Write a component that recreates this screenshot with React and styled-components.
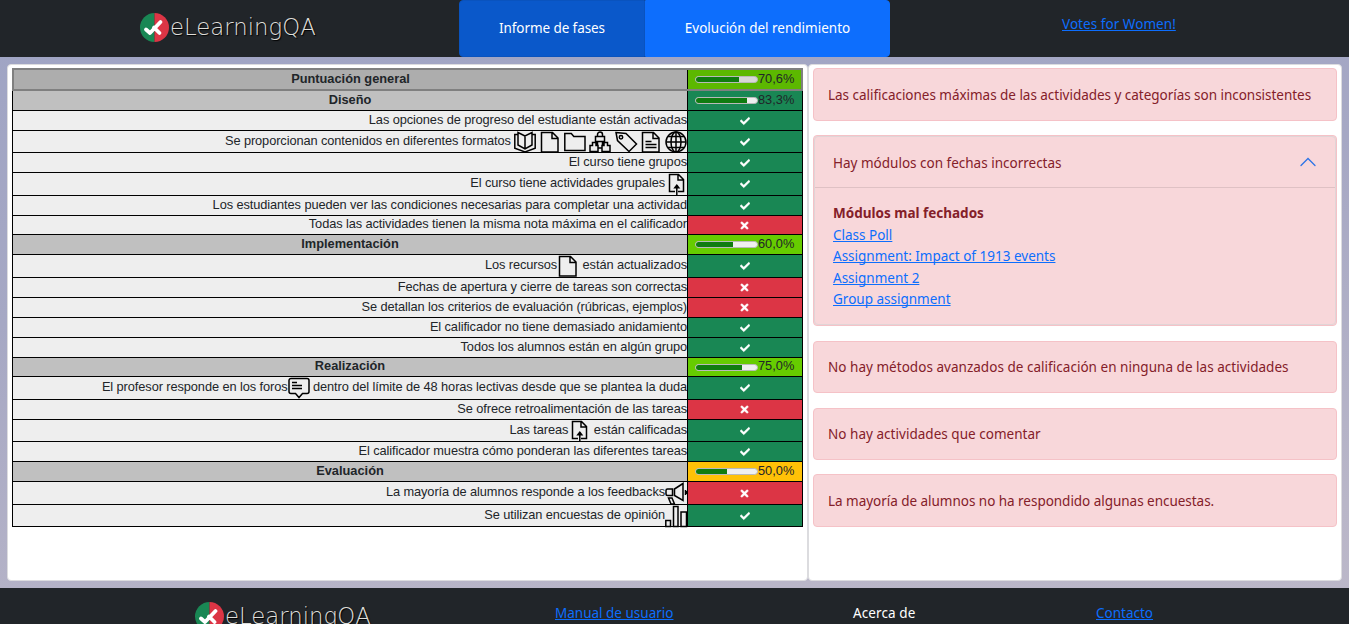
import React from 'react';
import styled, { createGlobalStyle } from 'styled-components';
import { FaCheck, FaTimes } from 'react-icons/fa';

const Global = createGlobalStyle`
  * { box-sizing: border-box; }
  body {
    margin: 0;
    height: 624px;
    overflow: hidden;
    color: #212529;
    font-family: "Noto Sans", "Open Sans", sans-serif;
    font-size: 13.5px;
  }
`;

const Page = styled.div`
  width: 1349px;
  height: 624px;
  overflow: hidden;
  display: flex;
  flex-direction: column;
  background: linear-gradient(172deg, #9fa4c4 0%, #a6a8c4 40%, #b9b6c8 85%, #bcb8c9 100%);
`;

const Header = styled.header`
  height: 57px;
  flex: none;
  display: flex;
  background: #212529;
`;

const HeaderSide = styled.div`
  width: ${(p) => p.$w}px;
  padding: ${(p) => p.$pad};
  flex: none;
`;

const Tab = styled.button`
  width: ${(p) => p.$w}px;
  height: 57px;
  border: 1px solid ${(p) => (p.$active ? '#0a53be' : '#0d6efd')};
  border-radius: ${(p) => (p.$active ? '4px 0 0 4px' : '0 4px 4px 0')};
  background: ${(p) => (p.$active ? '#0a58ca' : '#0d6efd')};
  color: #fff;
  font: inherit;
  padding: 0 0 2px;
  letter-spacing: ${(p) => p.$ls || 0}px;
`;

const Link = styled.a`
  color: #0d6efd;
  text-decoration: underline;
  text-underline-offset: 1px;
  text-decoration-thickness: 1px;
  text-decoration-skip-ink: none;
  letter-spacing: ${(p) => p.$ls || 0}px;
  white-space: nowrap;
`;

const LogoRow = styled.div`
  display: flex;
  align-items: center;
  height: 30px;
`;

const LogoText = styled.span`
  font-family: "DejaVu Sans", sans-serif;
  font-weight: 200;
  font-size: 22.8px;
  line-height: 30px;
  color: #deddd9;
  margin-left: 1px;
  text-shadow: 1px 1px 1px #000;
  white-space: nowrap;
`;

const Main = styled.main`
  height: 531px;
  flex: none;
  padding: 7px;
  display: flex;
`;

const Card = styled.section`
  width: ${(p) => p.$w}px;
  height: 517px;
  flex: none;
  background: #fff;
  border: 1px solid #dcdcdf;
  border-radius: 4px;
  padding: ${(p) => p.$pad};
`;

const Table = styled.div`
  width: 791px;
  font-family: "Liberation Sans", Arial, sans-serif;
  font-size: 12.8px;
`;

const Row = styled.div`
  display: flex;
  height: ${(p) => p.$h}px;
  border: solid #000;
  border-width: 0 1px 1px;
`;

const TotalRow = styled(Row)`
  border: 2px solid #808080;
`;

const Label = styled.div`
  width: ${(p) => p.$w || 674}px;
  flex: none;
  display: flex;
  align-items: center;
  justify-content: flex-end;
  background: #eee;
  white-space: pre;
  line-height: 18px;
  letter-spacing: -0.088px;
`;

const LabelText = styled.span`
  padding-bottom: 2px;
`;

const Heading = styled(Label)`
  justify-content: center;
  font-weight: bold;
  letter-spacing: 0;
  background: ${(p) => p.$bg || '#c0c0c0'};
  padding-bottom: 2px;
`;

const Status = styled.div`
  flex: 1;
  display: flex;
  align-items: center;
  justify-content: center;
  border-left: 1px solid #000;
  padding-right: 1px;
  background: ${(p) => (p.$ok ? '#198754' : '#dc3545')};
  color: #fff;
  font-size: ${(p) => (p.$ok ? 10 : 11)}px;
  svg {
    stroke: #fff;
    stroke-width: 20px;
  }
`;

const Score = styled.div`
  flex: 1;
  display: flex;
  align-items: center;
  border-left: 1px solid #000;
  padding-left: 7px;
  background: ${(p) => p.$bg};
  line-height: 16px;
  font-size: 12.8px;
`;

const ScoreText = styled.span`
  padding-bottom: 2px;
`;

const Track = styled.div`
  width: 63px;
  height: 7px;
  flex: none;
  overflow: hidden;
  border: 1px solid #b9b9b9;
  border-radius: 4px;
  background: ${(p) => p.$bg};
`;

const Fill = styled.div`
  height: 5px;
  background: #107c10;
`;

const Icons = styled.span`
  display: flex;
  gap: 3.2px;
  margin-left: ${(p) => p.$ml || 0}px;
`;

const Svg = styled.svg`
  width: 22px;
  height: 22px;
  flex: none;
  display: block;
  margin: -1px 0;
  overflow: visible;
  fill: none;
  stroke: #000;
  stroke-width: 1.5;
`;

const Alert = styled.div`
  height: ${(p) => p.$h}px;
  margin-bottom: ${(p) => p.$mb}px;
  display: flex;
  align-items: center;
  padding: 0 14px;
  background: #f8d7da;
  border: 1px solid #f5c2c7;
  border-radius: 4px;
  color: #842029;
  white-space: nowrap;
  letter-spacing: ${(p) => p.$ls || 0}px;
`;

const Accordion = styled.div`
  height: 191px;
  margin-bottom: 15px;
  background: #f8d7da;
  border: 1px solid #f5c2c7;
  border-radius: 4px;
  color: #842029;
`;

const AccordionInner = styled.div`
  height: 189px;
  border: 1px solid #e0d5d7;
  border-radius: 4px;
`;

const AccordionHead = styled.div`
  height: 51px;
  display: flex;
  align-items: center;
  justify-content: space-between;
  padding: 2px 19px 0 18px;
  border-bottom: 1px solid #dfc1c4;
  svg { margin-top: -2px; }
`;

const AccordionBody = styled.div`
  display: flex;
  flex-direction: column;
  align-items: flex-start;
  padding: 15px 18px;
  line-height: 21.5px;
`;

const Footer = styled.footer`
  height: 36px;
  flex: none;
  display: flex;
  background: #212529;
  color: #fff;
  overflow: hidden;
`;

const FooterCell = styled.div`
  width: ${(p) => p.$w}px;
  flex: none;
  padding-top: ${(p) => p.$pt}px;
  padding-left: ${(p) => p.$pl || 0}px;
  letter-spacing: ${(p) => p.$ls || 0}px;
  white-space: nowrap;
`;

const drawings = {
  book: (
    <path d="M4 3.500H.8v13.800L11 21l10.200-3.700V3.500H18M11 5L4 1.500v12.500l7 4 7-4V1.500zM11 5v13" />
  ),
  file: <path d="M2.500 1.500h11l5.500 5.500v14H2.500zM13 1.500v6H19" />,
  folder: <path d="M.8 19.500V2.500h6.500l2.500 3H21v14z" />,
  boxes: (
    <path d="M6.500 10.500V5.500h9v5zM8.500 5.500V3.500a2.500 2.500 0 0 1 5 0V5.500M1 20.500v-6h2.500v-3h3.500v3h2v6zM13 20.500v-6h2v-3h3.500v3H21v6zM8.500 10.500v4M13.500 10.500v4M9 17h4" />
  ),
  tag: (
    <>
      <path d="M1 1.500l10 1L21.500 13l-7.500 7.500L2.500 9.500z" />
      <circle cx="6" cy="6.200" r="1.700" />
    </>
  ),
  page: <path d="M2.500 1.500h11l5.500 5.500v14H2.500zM13 1.500V7.500h6M5.500 10.500h6M5.500 13.500h11M5.500 16.500h11" />,
  globe: (
    <>
      <circle cx="11" cy="11" r="10" />
      <ellipse cx="11" cy="11" rx="5" ry="10" />
      <path d="M11 1v20M1 11h20M3 5.500h16M3 16.500h16" />
    </>
  ),
  upload: (
    <>
      <path d="M10 18.500H4.500V1.500h9l5 5v12H13M13 1.500v5.500H18.500" />
      <path d="M11.800 22V12" />
      <path fill="#000" stroke="none" d="M8.300 15.500l3.500-4.500 3.500 4.500z" />
    </>
  ),
  forum: (
    <path d="M3 1.500h16a2 2 0 0 1 2 2V14.500a2 2 0 0 1-2 2h-4.500L11 20.500l-3.500-4H3a2 2 0 0 1-2-2v-11a2 2 0 0 1 2-2zM4 5.500h5M4 8.500h10M4 11.500h10" />
  ),
  horn: (
    <path d="M7.500 7H2.500a1.500 1.500 0 0 0-1.500 1.500v3.500a1.500 1.500 0 0 0 1.500 1.500h5zM9.500 7L18 1.500v17l-8.500-5zM20.500 8v5M22 9v3M3.500 16h3.500l2.500 6h-3.500z" />
  ),
  bars: <path d="M.8 15.500h4.700v6H.8zM8.500 1.500h4.500v20H8.500zM16 7h5.500v14.500h-5.500z" />,
};

const Icon = ({ name }) => <Svg viewBox="0 0 22 22">{drawings[name]}</Svg>;

const Logo = () => (
  <LogoRow>
    <svg width="29" height="29" viewBox="0 0 29 29">
      <path fill="#198754" d="M14.500 0a14.500 14.500 0 0 0 0 29z" />
      <path fill="#dc3545" d="M14.500 0a14.500 14.500 0 0 1 0 29z" />
      <path fill="none" stroke="#fff" strokeWidth="3.800" strokeLinecap="round" strokeLinejoin="round" d="M6 16.500l4 3.500L20.500 9M14 14.500l5.500 5.500" />
    </svg>
    <LogoText>eLearningQA</LogoText>
  </LogoRow>
);

const rows = [
  { h: 20, head: 'Diseño', score: '83,3%', value: 83.3, bg: '#198754' },
  { h: 20, ok: true, parts: ['Las opciones de progreso del estudiante están activadas'] },
  {
    h: 22,
    ok: true,
    parts: ['Se proporcionan contenidos en diferentes formatos', ['book', 'file', 'folder', 'boxes', 'tag', 'page', 'globe']],
    gap: 3,
  },
  { h: 20, ok: true, parts: ['El curso tiene grupos'] },
  { h: 23, ok: true, parts: ['El curso tiene actividades grupales', ['upload']] },
  { h: 20, ok: true, parts: ['Los estudiantes pueden ver las condiciones necesarias para completar una actividad'] },
  { h: 19, ok: false, parts: ['Todas las actividades tienen la misma nota máxima en el calificador'] },
  { h: 20, head: 'Implementación', score: '60,0%', value: 60, bg: '#66cc00' },
  { h: 23, ok: true, parts: ['Los recursos', ['file'], ' están actualizados'] },
  { h: 20, ok: false, parts: ['Fechas de apertura y cierre de tareas son correctas'] },
  { h: 20, ok: false, parts: ['Se detallan los criterios de evaluación (rúbricas, ejemplos)'] },
  { h: 20, ok: true, parts: ['El calificador no tiene demasiado anidamiento'] },
  { h: 20, ok: true, parts: ['Todos los alumnos están en algún grupo'] },
  { h: 19, head: 'Realización', score: '75,0%', value: 75, bg: '#66cc00' },
  {
    h: 23,
    ok: true,
    parts: ['El profesor responde en los foros', ['forum'], ' dentro del límite de 48 horas lectivas desde que se plantea la duda'],
  },
  { h: 20, ok: false, parts: ['Se ofrece retroalimentación de las tareas'] },
  { h: 22, ok: true, parts: ['Las tareas', ['upload'], ' están calificadas'] },
  { h: 20, ok: true, parts: ['El calificador muestra cómo ponderan las diferentes tareas'] },
  { h: 20, head: 'Evaluación', score: '50,0%', value: 50, bg: '#ffc107' },
  { h: 23, ok: false, parts: ['La mayoría de alumnos responde a los feedbacks', ['horn']] },
  { h: 22, ok: true, parts: ['Se utilizan encuestas de opinión', ['bars']] },
];

const ScoreCell = ({ bg, value, text, track = '#efefef' }) => (
  <Score $bg={bg}>
    <Track $bg={track}>
      <Fill style={{ width: `${value}%` }} />
    </Track>
    <ScoreText>{text}</ScoreText>
  </Score>
);

const ReportRow = ({ row }) => (
  <Row $h={row.h}>
    {row.head ? (
      <>
        <Heading>{row.head}</Heading>
        <ScoreCell bg={row.bg} value={row.value} text={row.score} />
      </>
    ) : (
      <>
        <Label>
          {row.parts.map((part, i) =>
            Array.isArray(part) ? (
              <Icons key={i} $ml={row.gap}>
                {part.map((name) => <Icon key={name} name={name} />)}
              </Icons>
            ) : (
              <LabelText key={i}>{part}</LabelText>
            )
          )}
        </Label>
        <Status $ok={row.ok}>{row.ok ? <FaCheck /> : <FaTimes />}</Status>
      </>
    )}
  </Row>
);

export default function App() {
  return (
    <>
      <Global />
      <Page>
        <Header>
          <HeaderSide $w={459} $pad="12px 0 0 140px"><Logo /></HeaderSide>
          <Tab $w={186} $active $ls={-0.08}>Informe de fases</Tab>
          <Tab $w={245}>Evolución del rendimiento</Tab>
          <HeaderSide $w={459} $pad="15px 0 0 172px"><Link href="#" $ls={0.05}>Votes for Women!</Link></HeaderSide>
        </Header>
        <Main>
          <Card $w={801} $pad="3px 4px">
            <Table>
              <TotalRow $h={23}>
                <Heading $w={673} $bg="#adadad">Puntuación general</Heading>
                <ScoreCell bg="#5cb800" value={70.6} text="70,6%" track="#d7d7d7" />
              </TotalRow>
              {rows.map((row, i) => <ReportRow key={i} row={row} />)}
            </Table>
          </Card>
          <Card $w={534} $pad="3px 4px">
            <Alert $h={53} $mb={14} $ls={-0.03}>Las calificaciones máximas de las actividades y categorías son inconsistentes</Alert>
            <Accordion>
              <AccordionInner>
                <AccordionHead>
                  Hay módulos con fechas incorrectas
                  <svg width="16" height="16" viewBox="0 0 16 16" fill="none" stroke="#2f74e6" strokeWidth="1.300" strokeLinecap="round">
                    <path d="M1 11.500L8 4.500l7 7" />
                  </svg>
                </AccordionHead>
                <AccordionBody>
                  <b>Módulos mal fechados</b>
                  <Link href="#">Class Poll</Link>
                  <Link href="#">Assignment: Impact of 1913 events</Link>
                  <Link href="#">Assignment 2</Link>
                  <Link href="#">Group assignment</Link>
                </AccordionBody>
              </AccordionInner>
            </Accordion>
            <Alert $h={52} $mb={15} $ls={0.03}>No hay métodos avanzados de calificación en ninguna de las actividades</Alert>
            <Alert $h={52} $mb={14} $ls={0.03}>No hay actividades que comentar</Alert>
            <Alert $h={53} $mb={0} $ls={-0.03}>La mayoría de alumnos no ha respondido algunas encuestas.</Alert>
          </Card>
        </Main>
        <Footer>
          <FooterCell $w={555} $pt={13} $pl={195}><Logo /></FooterCell>
          <FooterCell $w={298} $pt={16}><Link href="#">Manual de usuario</Link></FooterCell>
          <FooterCell $w={243} $pt={16} $ls={0.1}>Acerca de</FooterCell>
          <FooterCell $w={253} $pt={16}><Link href="#">Contacto</Link></FooterCell>
        </Footer>
      </Page>
    </>
  );
}
